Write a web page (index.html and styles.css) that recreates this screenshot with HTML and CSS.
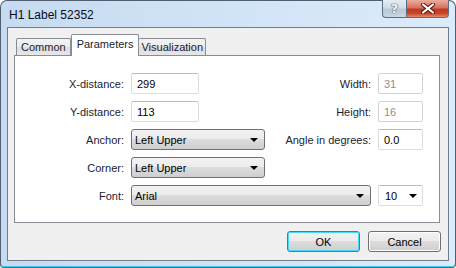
FILE: index.html
```html
<!DOCTYPE html>
<html lang="en">

<head>
    <meta charset="UTF-8">
    <title>H1 Label 52352</title>
    <link rel="stylesheet" href="styles.css">
</head>

<body>

    <div class="window">
        <div class="titlebar">
            <span class="title">H1 Label 52352</span>
            <div class="caption-buttons">
                <span class="cap-btn help"><span class="help-glyph">?</span></span>
                <span class="cap-btn close">
                    <svg width="16" height="11" viewBox="0 0 16 11">
                        <path d="M3 1.5 L13 9.5 M13 1.5 L3 9.5" stroke="#5a1e12" stroke-width="4.2" stroke-linecap="round" fill="none" />
                        <path d="M3 1.5 L13 9.5 M13 1.5 L3 9.5" stroke="#ffffff" stroke-width="2.2" stroke-linecap="round" fill="none" />
                    </svg>
                </span>
            </div>
        </div>

        <div class="client">
            <div class="tabs">
                <span class="tab">Common</span>
                <span class="tab active">Parameters</span>
                <span class="tab">Visualization</span>
            </div>

            <div class="panel">
                <div class="fields">
                    <label class="field-label">X-distance:</label>
                    <span class="textbox">299</span>
                    <label class="field-label">Width:</label>
                    <span class="textbox disabled">31</span>

                    <label class="field-label">Y-distance:</label>
                    <span class="textbox">113</span>
                    <label class="field-label">Height:</label>
                    <span class="textbox disabled">16</span>

                    <label class="field-label">Anchor:</label>
                    <span class="combo">Left Upper<span class="arrow"></span></span>
                    <label class="field-label">Angle in degrees:</label>
                    <span class="textbox">0.0</span>

                    <label class="field-label">Corner:</label>
                    <span class="combo">Left Upper<span class="arrow"></span></span>
                    <span></span>
                    <span></span>

                    <label class="field-label">Font:</label>
                    <span class="combo wide">Arial<span class="arrow"></span></span>
                    <span class="combo edit">10<span class="arrow"></span></span>
                </div>
            </div>

            <div class="buttons">
                <button class="btn default">OK</button>
                <button class="btn">Cancel</button>
            </div>
        </div>
    </div>

</body>

</html>
```

FILE: styles.css
```css
body {
    margin: 0;
    font-family: 'Liberation Sans', Arial, sans-serif;
    font-size: 11px;
    color: #1b1b33;
    background-color: #ffffff;
}

.window {
    box-sizing: border-box;
    width: 456px;
    height: 268px;
    padding: 0 6px 7px 6px;
    border: 1px solid #4f5f70;
    border-bottom-color: #3a6f8e;
    border-radius: 7px 7px 4px 4px;
    background: linear-gradient(to right, #c6dbf1 0%, #d3e5f7 60%, #dcebf9 100%);
    box-shadow: inset 0 -1px 0 #46c7ee;
}

.titlebar {
    display: flex;
    justify-content: space-between;
    align-items: flex-start;
    height: 26px;
}

.title {
    margin: 7px 0 0 2px;
    font-size: 12px;
    color: #0b0b1a;
}

.caption-buttons {
    display: flex;
    margin-top: -1px;
}

.cap-btn {
    box-sizing: border-box;
    height: 18px;
    display: flex;
    align-items: center;
    justify-content: center;
    border: 1px solid #5e6e7e;
    border-top: none;
}

.help {
    width: 24px;
    border-right: none;
    border-radius: 0 0 0 4px;
    background: linear-gradient(to bottom, #e4ecf4 0%, #d2dde8 45%, #b9c8d7 55%, #c9d6e2 100%);
}

.help-glyph {
    font-family: 'DejaVu Sans', sans-serif;
    font-size: 13px;
    font-weight: bold;
    color: #f4f7fa;
    text-shadow: 0 0 1px #4f5a66, 0 0 1px #4f5a66, 0 0 1px #4f5a66;
    margin-top: -1px;
}

.close {
    width: 43px;
    border-radius: 0 0 4px 0;
    background: linear-gradient(to bottom, #e9ad9e 0%, #d9735e 45%, #c2391f 55%, #c8482c 80%, #e28a6c 100%);
}

.client {
    box-sizing: border-box;
    height: 234px;
    border: 1px solid #6f7e8e;
    background-color: #f0f0f0;
    display: flex;
    flex-direction: column;
}

.tabs {
    display: flex;
    align-items: flex-end;
    height: 20px;
    margin: 7px 0 0 8px;
}

.tab {
    box-sizing: border-box;
    height: 17px;
    padding: 0 4px;
    display: flex;
    align-items: center;
    border: 1px solid #898c95;
    border-bottom: none;
    border-left: none;
    border-radius: 2px 2px 0 0;
    background: linear-gradient(to bottom, #f3f3f3 0%, #ebebeb 50%, #dedede 51%, #e6e6e6 100%);
}

.tab:first-child {
    border-left: 1px solid #898c95;
}

.tab.active {
    position: relative;
    z-index: 1;
    height: 22px;
    margin-bottom: -1px;
    padding: 0 5px 3px 5px;
    border-left: 1px solid #898c95;
    background: #ffffff;
}

.tab.active + .tab {
    border-left: none;
    padding: 0 2px;
}

.panel {
    box-sizing: border-box;
    width: 426px;
    height: 168px;
    margin-left: 6px;
    border: 1px solid #898c95;
    background-color: #ffffff;
}

.fields {
    display: grid;
    grid-template-columns: 109px 134px 99px 45px;
    grid-auto-rows: 21px;
    column-gap: 7px;
    row-gap: 7px;
    padding-top: 17px;
}

.field-label {
    display: flex;
    align-items: center;
    justify-content: flex-end;
    white-space: nowrap;
}

.textbox {
    box-sizing: border-box;
    width: 68px;
    display: flex;
    align-items: center;
    padding-left: 5px;
    border: 1px solid #d9dde3;
    border-top-color: #b9bcc2;
    border-radius: 2px;
    background: #ffffff;
    color: #000;
}

.fields .textbox:nth-child(4n) {
    width: 45px;
}

.textbox.disabled {
    color: #8f8f8f;
    border-color: #d3d3d3;
}

.combo {
    box-sizing: border-box;
    display: flex;
    align-items: center;
    justify-content: space-between;
    padding: 0 6px 0 3px;
    border: 1px solid #707070;
    border-radius: 3px;
    background: linear-gradient(to bottom, #f3f3f3 0%, #ebebeb 49%, #dddddd 50%, #cfcfcf 100%);
    color: #000;
}

.combo.wide {
    grid-column: span 2;
}

.combo.edit {
    padding: 0 5px 0 6px;
    border: 1px solid #d9dde3;
    border-top-color: #b9bcc2;
    border-radius: 2px;
    background: #ffffff;
}

.arrow {
    width: 0;
    height: 0;
    border-left: 4px solid transparent;
    border-right: 4px solid transparent;
    border-top: 4px solid #000;
    margin-top: 1px;
}

.buttons {
    display: flex;
    justify-content: flex-end;
    gap: 8px;
    margin: 8px 7px 0 0;
}

.btn {
    box-sizing: border-box;
    width: 73px;
    height: 21px;
    padding: 0;
    font-family: 'Liberation Sans', Arial, sans-serif;
    font-size: 11px;
    color: #000;
    border: 1px solid #707070;
    border-radius: 3px;
    background: linear-gradient(to bottom, #f2f2f2 0%, #ebebeb 49%, #dddddd 50%, #cfcfcf 100%);
    box-shadow: inset 0 0 0 1px #fcfcfc;
}

.btn.default {
    border-color: #3c7fb1;
    box-shadow: inset 0 0 0 1px #48d8fa;
}
```
